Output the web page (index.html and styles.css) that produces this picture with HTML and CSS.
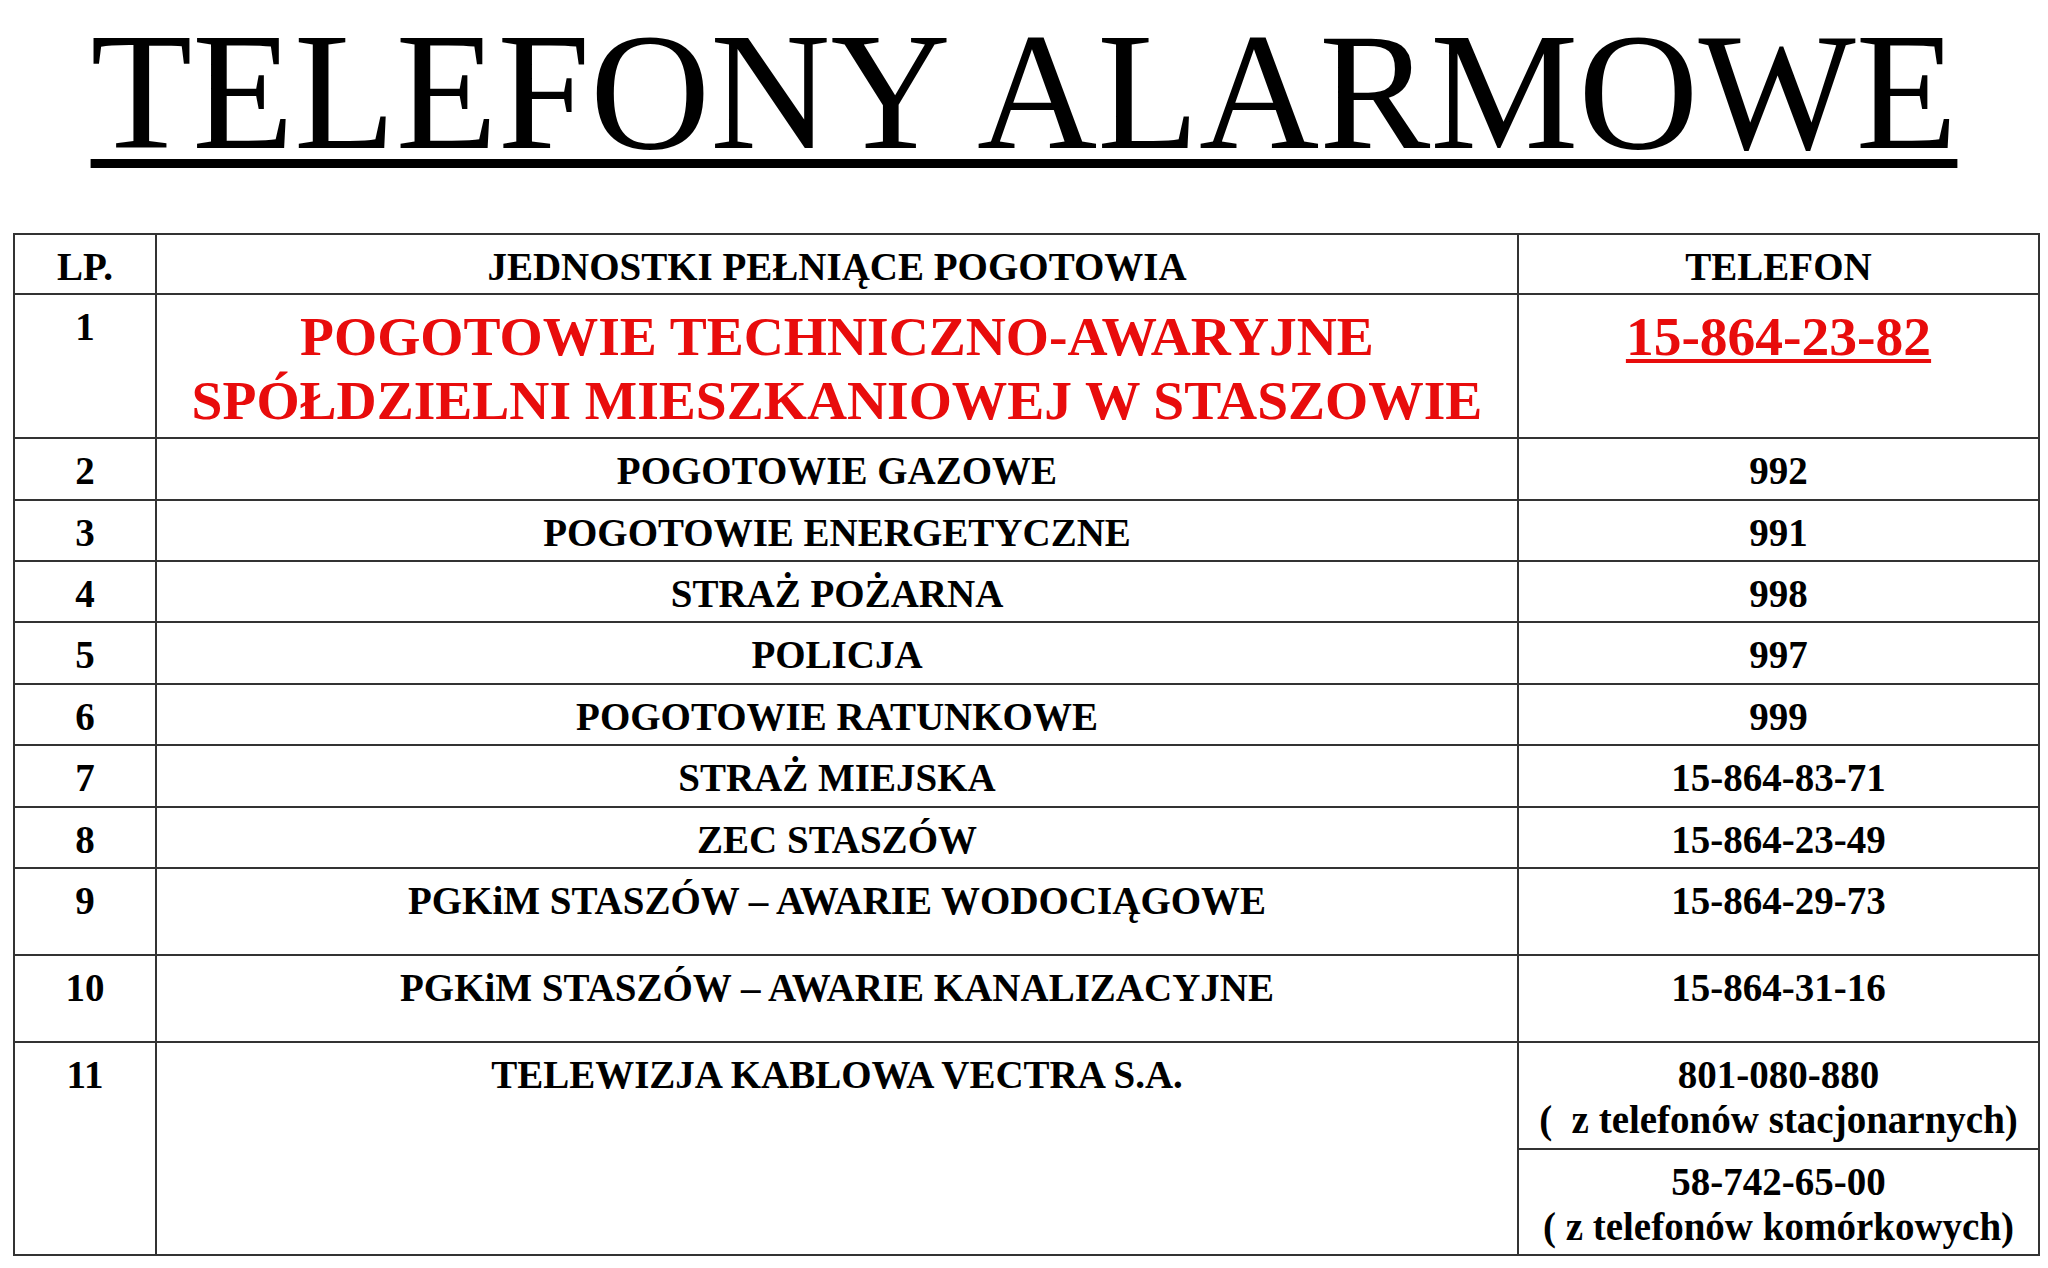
FILE: index.html
```html
<!DOCTYPE html>
<html lang="pl">
<head>
<meta charset="utf-8">
<title>Telefony alarmowe</title>
<link rel="stylesheet" href="styles.css">
</head>
<body>
<h1 class="title"><span class="title-text">TELEFONY ALARMOWE</span></h1>
<table class="phones">
  <colgroup>
    <col class="c-lp">
    <col class="c-name">
    <col class="c-tel">
  </colgroup>
  <tr class="r-head">
    <td>LP.</td>
    <td>JEDNOSTKI PEŁNIĄCE POGOTOWIA</td>
    <td>TELEFON</td>
  </tr>
  <tr class="r-main">
    <td>1</td>
    <td class="red big">POGOTOWIE TECHNICZNO-AWARYJNE<br>SPÓŁDZIELNI MIESZKANIOWEJ W STASZOWIE</td>
    <td class="red big"><span class="u">15-864-23-82</span></td>
  </tr>
  <tr class="r-std"><td>2</td><td>POGOTOWIE GAZOWE</td><td>992</td></tr>
  <tr class="r-std"><td>3</td><td>POGOTOWIE ENERGETYCZNE</td><td>991</td></tr>
  <tr class="r-std"><td>4</td><td>STRAŻ POŻARNA</td><td>998</td></tr>
  <tr class="r-std"><td>5</td><td>POLICJA</td><td>997</td></tr>
  <tr class="r-std"><td>6</td><td>POGOTOWIE RATUNKOWE</td><td>999</td></tr>
  <tr class="r-std"><td>7</td><td>STRAŻ MIEJSKA</td><td>15-864-83-71</td></tr>
  <tr class="r-std"><td>8</td><td>ZEC STASZÓW</td><td>15-864-23-49</td></tr>
  <tr class="r-tall"><td>9</td><td>PGKiM STASZÓW – AWARIE WODOCIĄGOWE</td><td>15-864-29-73</td></tr>
  <tr class="r-tall"><td>10</td><td>PGKiM STASZÓW – AWARIE KANALIZACYJNE</td><td>15-864-31-16</td></tr>
  <tr class="r-sub1">
    <td rowspan="2">11</td>
    <td rowspan="2">TELEWIZJA KABLOWA VECTRA S.A.</td>
    <td>801-080-880<br>(&nbsp; z telefonów stacjonarnych)</td>
  </tr>
  <tr class="r-sub2">
    <td>58-742-65-00<br>( z telefonów komórkowych)</td>
  </tr>
</table>
</body>
</html>
```

FILE: styles.css
```css
html, body {
  margin: 0;
  padding: 0;
  background: #ffffff;
}

body {
  font-family: "Liberation Serif", "Times New Roman", serif;
  color: #000;
}

.title {
  margin: 9px 0 0 0;
  font-size: 166.5px;
  line-height: 166px;
  font-weight: normal;
  text-align: center;
  white-space: nowrap;
}

.title-text {
  text-decoration: underline;
  text-decoration-thickness: 9px;
  text-underline-offset: 11px;
}

.phones {
  margin: 58px 0 0 13px;
  width: 2025px;
  border-collapse: collapse;
  table-layout: fixed;
  font-weight: bold;
  font-size: 39px;
  line-height: 45px;
}

.c-lp { width: 142px; }
.c-name { width: 1362px; }
.c-tel { width: 521px; }

.phones td {
  border: 2px solid #333;
  text-align: center;
  vertical-align: top;
  padding: 9px 0 0 0;
  white-space: nowrap;
}

.r-head td { height: 49.3px; }
.r-main td { height: 132px; }
.r-std td { height: 50.4px; }
.r-tall td { height: 76.2px; }
.r-sub1 td { height: 95.8px; }
.r-sub2 td { height: 94.3px; }

.red {
  color: #e80c0c;
}

.big {
  font-size: 55.5px;
  line-height: 64px;
}

.phones td.big {
  padding-top: 10px;
}

.u {
  text-decoration: underline;
  text-decoration-thickness: 4px;
  text-underline-offset: 4px;
}
```
